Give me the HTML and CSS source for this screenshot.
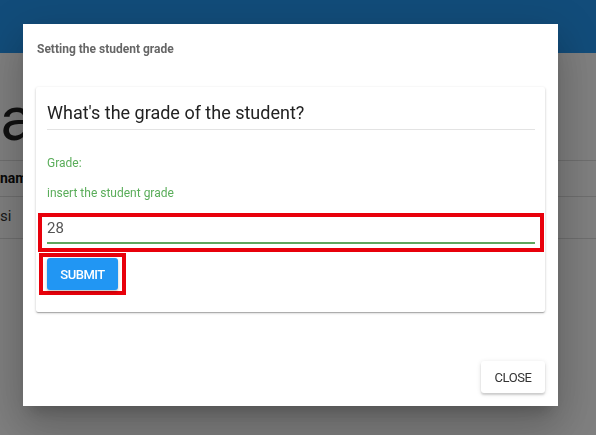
FILE: index.html
```html
<!DOCTYPE html>
<html>
<head>
<meta charset="utf-8">
<link rel="stylesheet" href="styles.css">
</head>
<body>
<div class="page">
  <header class="topbar"></header>
  <h1 class="page-title">a</h1>
  <div class="table">
    <div class="row head">nam</div>
    <div class="row">si</div>
  </div>
</div>
<div class="overlay"></div>
<div class="modal">
  <div class="modal-title">Setting the student grade</div>
  <div class="card">
    <h2 class="card-heading">What's the grade of the student?</h2>
    <p class="label">Grade:</p>
    <p class="label hint">insert the student grade</p>
    <div class="mark mark-input">
      <div class="field">28</div>
    </div>
    <div class="mark mark-btn">
      <button class="btn-submit">SUBMIT</button>
    </div>
  </div>
  <div class="modal-footer">
    <button class="btn-close">CLOSE</button>
  </div>
</div>
</body>
</html>
```

FILE: styles.css
```css
html, body {
  margin: 0;
  padding: 0;
  background: #fff;
  font-family: Roboto, "Liberation Sans", sans-serif;
  overflow: hidden;
}
.page {
  width: 596px;
  height: 435px;
}
.topbar {
  height: 53px;
  background: #2499f5;
}
.page-title {
  margin: 35px 0 0 0;
  font-size: 62px;
  font-weight: 400;
  line-height: 62px;
  color: #222;
}
.table {
  margin-top: 10px;
}
.row {
  border-top: 1px solid #ddd;
  height: 35px;
  line-height: 35px;
  font-size: 15px;
  color: #333;
}
.row.head {
  font-weight: 700;
  font-size: 14px;
  color: #111;
}
.row:last-child {
  height: 41px;
  line-height: 38px;
  border-bottom: 1px solid #ddd;
}
.overlay {
  position: fixed;
  inset: 0;
  background: rgba(0, 0, 0, 0.5);
}
.modal {
  position: fixed;
  left: 23px;
  top: 24px;
  width: 535px;
  height: 382px;
  background: #fff;
  box-sizing: border-box;
  padding: 17px 13px 0 13px;
  display: flex;
  flex-direction: column;
  box-shadow: 0 11px 15px -7px rgba(0,0,0,.2), 0 24px 38px 3px rgba(0,0,0,.14), 0 9px 46px 8px rgba(0,0,0,.12);
}
.modal-title {
  font-size: 12px;
  line-height: 16px;
  font-weight: 700;
  color: #666;
  padding-left: 1px;
}
.card {
  margin-top: 30px;
  background: #fff;
  padding: 14px 10px 17px 11px;
  box-shadow: 0 1px 3px rgba(0,0,0,.2), 0 1px 1px rgba(0,0,0,.14), 0 2px 1px -1px rgba(0,0,0,.12);
  border-radius: 2px;
}
.card-heading {
  margin: 0;
  font-size: 18px;
  line-height: 24px;
  font-weight: 400;
  color: #222;
  padding-bottom: 4px;
  border-bottom: 1px solid #e3e3e3;
}
.label {
  margin: 25px 0 0 0;
  font-size: 12px;
  line-height: 16px;
  color: #5aad5a;
}
.label.hint {
  margin-top: 14px;
}
.mark {
  border: 4px solid #e8000b;
}
.mark-input {
  margin: 12px -9px 0 -9px;
  padding: 1px 5px 4px 5px;
}
.field {
  font-size: 15px;
  line-height: 20px;
  color: #555;
  padding-bottom: 4px;
  border-bottom: 2px solid #5ea65e;
}
.mark-btn {
  margin: 1px 0 0 -8px;
  padding: 1px 4px;
  width: max-content;
}
.btn-submit {
  display: block;
  width: 71px;
  height: 32px;
  border: none;
  border-radius: 3px;
  background: #2196f3;
  color: #fff;
  font-family: Roboto, "Liberation Sans", sans-serif;
  font-size: 13px;
  font-weight: 500;
  letter-spacing: -0.5px;
  padding: 0;
  box-shadow: 0 2px 2px rgba(0,0,0,.14), 0 1px 5px rgba(0,0,0,.12);
}
.modal-footer {
  margin-top: auto;
  display: flex;
  justify-content: flex-end;
  padding-bottom: 13px;
}
.btn-close {
  width: 64px;
  height: 32px;
  border: none;
  border-radius: 3px;
  background: #fff;
  color: #333;
  font-family: Roboto, "Liberation Sans", sans-serif;
  font-size: 13px;
  font-weight: 400;
  letter-spacing: -0.4px;
  padding: 0;
  box-shadow: 0 2px 2px rgba(0,0,0,.14), 0 1px 5px rgba(0,0,0,.12);
}
```
